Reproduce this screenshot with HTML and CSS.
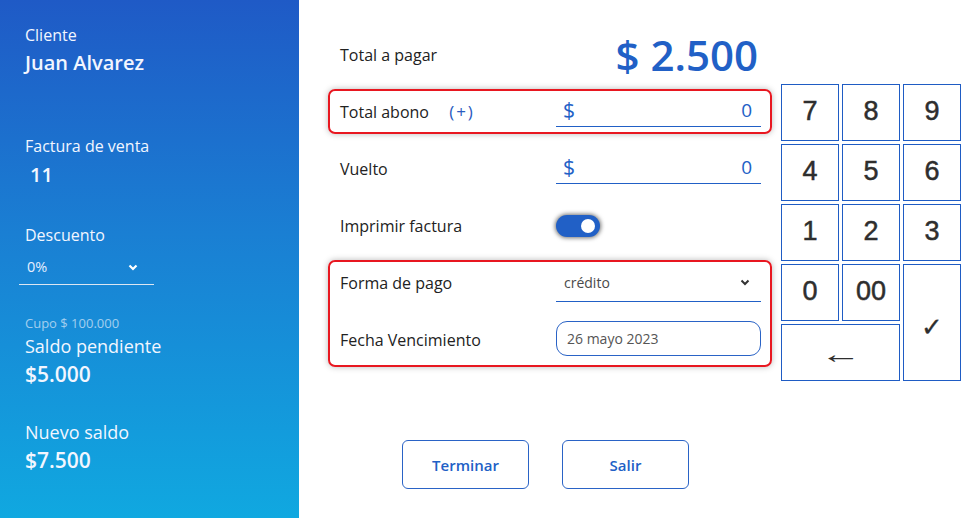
FILE: index.html
```html
<!DOCTYPE html>
<html lang="es">
<head>
<meta charset="utf-8">
<title>Pago</title>
<link rel="stylesheet" href="styles.css">
</head>
<body>
<aside class="sidebar">
  <div class="s-label s-first">Cliente</div>
  <div class="s-value s-name">Juan Alvarez</div>
  <div class="s-label s-factura">Factura de venta</div>
  <div class="s-value s-num">11</div>
  <div class="s-label s-desc">Descuento</div>
  <div class="s-select">
    <span>0%</span>
    <svg class="chev" width="10" height="7" viewBox="0 0 10 7"><path d="M1.5 1.5 L5 5 L8.5 1.5" fill="none" stroke="#fff" stroke-width="2.2"/></svg>
  </div>
  <div class="s-cupo">Cupo $ 100.000</div>
  <div class="s-big-label s-saldo">Saldo pendiente</div>
  <div class="s-value s-amount">$5.000</div>
  <div class="s-big-label s-nuevo">Nuevo saldo</div>
  <div class="s-value s-amount">$7.500</div>
</aside>
<main class="main">
  <section class="form">
    <div class="row">
      <div class="label">Total a pagar</div>
      <div class="total">$ 2.500</div>
    </div>
    <div class="row box">
      <div class="label">Total abono <span class="plus">(+)</span></div>
      <div class="money"><span class="cur">$</span><span class="num">0</span></div>
    </div>
    <div class="row">
      <div class="label">Vuelto</div>
      <div class="money"><span class="cur">$</span><span class="num">0</span></div>
    </div>
    <div class="row">
      <div class="label">Imprimir factura</div>
      <div class="toggle"><span class="knob"></span></div>
    </div>
    <div class="group">
      <div class="row inner">
        <div class="label">Forma de pago</div>
        <div class="select">
          <span>crédito</span>
          <svg width="10" height="7" viewBox="0 0 10 7"><path d="M1.5 1.5 L5 5 L8.5 1.5" fill="none" stroke="#333" stroke-width="2"/></svg>
        </div>
      </div>
      <div class="row inner second">
        <div class="label">Fecha Vencimiento</div>
        <div class="date">26 mayo 2023</div>
      </div>
    </div>
    <div class="actions">
      <button class="btn">Terminar</button>
      <button class="btn">Salir</button>
    </div>
  </section>
  <section class="keypad">
    <div class="key">7</div>
    <div class="key">8</div>
    <div class="key">9</div>
    <div class="key">4</div>
    <div class="key">5</div>
    <div class="key">6</div>
    <div class="key">1</div>
    <div class="key">2</div>
    <div class="key">3</div>
    <div class="key">0</div>
    <div class="key">00</div>
    <div class="key key-ok">✓</div>
    <div class="key key-back"><span class="arrow">←</span></div>
  </section>
</main>
</body>
</html>
```
FILE: styles.css
```css
* { box-sizing: border-box; }
html, body { margin: 0; padding: 0; }
body {
  width: 976px;
  height: 518px;
  display: flex;
  font-family: "Open Sans", "Noto Sans", sans-serif;
  background: #fff;
  color: #222;
  overflow: hidden;
}

/* Sidebar */
.sidebar {
  width: 299px;
  flex: none;
  height: 518px;
  padding: 25px 0 0 25px;
  background: linear-gradient(180deg, #1f5ac6 0%, #1a7fd3 45%, #10a8e0 100%);
  color: #f2f6ff;
  display: flex;
  flex-direction: column;
}
.s-label { font-size: 16px; line-height: 20px; }
.s-value { font-size: 20px; line-height: 28px; font-weight: 600; }
.s-name { margin-top: 4px; }
.s-factura { margin-top: 59px; }
.s-num { margin-top: 5px; padding-left: 5px; }
.s-desc { margin-top: 36px; }
.s-select {
  margin-top: 11px;
  margin-left: -6px;
  width: 135px;
  display: flex;
  align-items: center;
  justify-content: space-between;
  padding: 0 16px 6px 8px;
  font-size: 14.5px;
  line-height: 22px;
  border-bottom: 1px solid #dce6f2;
  color: #e6efff;
}
.s-cupo {
  margin-top: 30px;
  font-size: 13px;
  line-height: 16px;
  color: rgba(225, 236, 250, 0.7);
}
.s-big-label { font-size: 18px; line-height: 22px; }
.s-saldo { margin-top: 4px; }
.s-amount { margin-top: 3px; font-size: 21px; }
.s-nuevo { margin-top: 33px; }

/* Main */
.main {
  flex: 1;
  display: flex;
  padding: 32px 0 0 29px;
}
.form {
  width: 444px;
  display: flex;
  flex-direction: column;
  gap: 12px;
}
.row {
  height: 45px;
  display: flex;
  align-items: center;
  padding: 0 11px 0 12px;
}
.label {
  width: 216px;
  flex: none;
  font-size: 16px;
  color: #222;
}
.plus {
  color: #2a5bc0;
  margin-left: 16px;
  font-size: 17px;
  letter-spacing: 2px;
}
.total {
  width: 205px;
  text-align: right;
  padding-right: 3px;
  font-size: 42px;
  font-weight: 600;
  color: #2160c6;
  line-height: 45px;
}
.box {
  border: 2px solid #e81720;
  border-radius: 7px;
  padding: 0 9px 0 10px;
  box-shadow: 0 0 6px rgba(0, 0, 0, 0.28);
}
.money {
  width: 205px;
  height: 30px;
  display: flex;
  align-items: center;
  justify-content: space-between;
  padding: 0 9px 2px 7px;
  border-bottom: 1.5px solid #2160c6;
  color: #2160c6;
  font-size: 19px;
}
.money .cur { font-size: 21px; }
.toggle {
  width: 44px;
  height: 22px;
  border-radius: 11px;
  background: #2160c6;
  box-shadow: 0 0 4px 1px rgba(0, 0, 0, 0.55);
  display: flex;
  align-items: center;
  justify-content: flex-end;
  padding-right: 5px;
}
.knob {
  width: 14px;
  height: 14px;
  border-radius: 50%;
  background: #fff;
}
.group {
  border: 2px solid #e81720;
  border-radius: 7px;
  box-shadow: 0 0 6px rgba(0, 0, 0, 0.28);
  padding: 0 9px 4px 10px;
  display: flex;
  flex-direction: column;
  gap: 15px;
}
.row.inner { height: 42px; padding: 0; }
.select {
  width: 205px;
  height: 32px;
  margin-top: 6px;
  display: flex;
  align-items: center;
  justify-content: space-between;
  padding: 0 11px 6px 8px;
  border-bottom: 1.5px solid #2160c6;
  font-size: 14px;
  color: #4a4a4a;
}
.date {
  width: 205px;
  height: 35px;
  margin-top: -3px;
  border: 1px solid #2a63c6;
  border-radius: 11px;
  padding: 0 10px;
  display: flex;
  align-items: center;
  font-size: 14px;
  color: #555;
}
.actions {
  margin-top: 61px;
  display: flex;
  gap: 33px;
  padding-left: 74px;
}
.btn {
  width: 127px;
  height: 49px;
  border: 1px solid #2a63c6;
  border-radius: 6px;
  background: #fff;
  color: #2160c6;
  font-family: "Open Sans", "Noto Sans", sans-serif;
  font-size: 15px;
  font-weight: 600;
}

/* Keypad */
.keypad {
  margin: 52px 0 0 9px;
  display: grid;
  grid-template-columns: repeat(3, 58px);
  grid-template-rows: repeat(5, 57px);
  column-gap: 3px;
  row-gap: 3px;
  align-self: flex-start;
}
.key {
  border: 1.5px solid #1f5cc4;
  display: flex;
  align-items: center;
  justify-content: center;
  font-family: "Liberation Sans", Arial, sans-serif;
  font-size: 27px;
  color: #2e2e2e;
  -webkit-text-stroke: 0.5px #2e2e2e;
  padding-bottom: 2px;
}
.key-ok {
  grid-column: 3;
  grid-row: 4 / span 2;
  font-family: "DejaVu Sans", sans-serif;
  font-size: 26px;
  -webkit-text-stroke: 0.3px #2e2e2e;
  padding: 8px 0 0;
}
.key-back {
  grid-column: 1 / span 2;
  grid-row: 5;
  padding-top: 6px;
  -webkit-text-stroke: 0;
}
.arrow {
  display: inline-block;
  font-size: 26px;
  transform: scaleX(1.6);
}
```
